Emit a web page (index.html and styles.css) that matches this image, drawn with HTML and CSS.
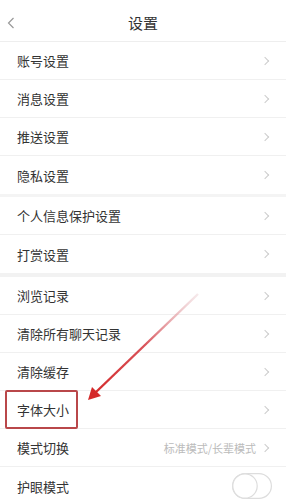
FILE: index.html
```html
<!DOCTYPE html>
<html lang="zh-CN">
<head>
    <meta charset="UTF-8">
    <meta name="viewport" content="width=device-width, initial-scale=1.0">
    <title>设置</title>
    <link rel="stylesheet" href="styles.css">
</head>
<body>

    <div class="header">
        <svg class="back" width="8" height="12" viewBox="0 0 8 12">
            <path d="M6.5 1 L1.5 6 L6.5 11" fill="none" stroke="#999" stroke-width="1.2"/>
        </svg>
        <h1>设置</h1>
    </div>

    <!-- 第一组 -->
    <div class="group">
        <div class="row"><span class="label">账号设置</span><i class="arrow"></i></div>
        <div class="row"><span class="label">消息设置</span><i class="arrow"></i></div>
        <div class="row"><span class="label">推送设置</span><i class="arrow"></i></div>
        <div class="row"><span class="label">隐私设置</span><i class="arrow"></i></div>
    </div>

    <!-- 第二组 -->
    <div class="group gap-small">
        <div class="row"><span class="label">个人信息保护设置</span><i class="arrow"></i></div>
        <div class="row"><span class="label">打赏设置</span><i class="arrow"></i></div>
    </div>

    <!-- 第三组 -->
    <div class="group gap-big">
        <div class="row"><span class="label">浏览记录</span><i class="arrow"></i></div>
        <div class="row"><span class="label">清除所有聊天记录</span><i class="arrow"></i></div>
        <div class="row"><span class="label">清除缓存</span><i class="arrow"></i></div>
        <div class="row"><span class="label"><span class="marked">字体大小</span></span><i class="arrow"></i></div>
        <div class="row"><span class="label">模式切换</span><span class="value">标准模式/长辈模式</span><i class="arrow"></i></div>
        <div class="row">
            <span class="label">护眼模式</span>
            <svg class="switch" width="40" height="26" viewBox="0 0 40 26">
                <rect x="0.6" y="0.6" width="38.8" height="24.8" rx="12.4" fill="#fff" stroke="#ddd" stroke-width="1.2"/>
                <circle cx="13" cy="13" r="12.2" fill="#fff" stroke="#ddd" stroke-width="1.2"/>
            </svg>
        </div>
    </div>

    <!-- 标注箭头 -->
    <svg class="pointer" width="286" height="500" viewBox="0 0 286 500">
        <defs>
            <linearGradient id="fade" x1="198" y1="294" x2="92" y2="396" gradientUnits="userSpaceOnUse">
                <stop offset="0" stop-color="#e8c8cc" stop-opacity="0.4"/>
                <stop offset="0.5" stop-color="#d9535a"/>
                <stop offset="1" stop-color="#d42a2a"/>
            </linearGradient>
        </defs>
        <line x1="198" y1="294" x2="95" y2="393" stroke="url(#fade)" stroke-width="2.4"/>
        <path d="M88 400 L92 387 L101 396 Z" fill="#d42a2a"/>
    </svg>

</body>
</html>
```

FILE: styles.css
```css
body {
    margin: 0;
    font-family: "Noto Sans CJK SC", "Noto Sans", sans-serif;
    background-color: #fff;
    color: #333;
    width: 286px;
    height: 500px;
    overflow: hidden;
    position: relative;
}
.header {
    height: 41px;
    border-bottom: 1px solid #eee;
    display: flex;
    align-items: center;
    justify-content: center;
    position: relative;
}
.header h1 {
    margin: 0;
    font-size: 15px;
    font-weight: normal;
    color: #333;
    padding-top: 4px;
}
.back {
    position: absolute;
    left: 7px;
    top: 17px;
}
.gap-small {
    border-top: 3px solid #f4f4f4;
}
.gap-big {
    border-top: 4px solid #f2f2f2;
}
.row {
    height: 37px;
    border-bottom: 1px solid #f0f0f0;
    display: flex;
    align-items: center;
    padding: 0 18px 0 17px;
    font-size: 13px;
}
.group .row:last-child {
    border-bottom: none;
    height: 38px;
}
.label {
    flex: 1;
}
.marked {
    display: inline-block;
    margin-left: -12px;
    padding: 8px 7px 8px 10px;
    border: 2px solid #b9474a;
    border-radius: 2px;
}
.value {
    font-size: 11px;
    color: #bbb;
    margin-right: 6px;
}
.arrow {
    width: 5px;
    height: 5px;
    border-top: 1px solid #ccc;
    border-right: 1px solid #ccc;
    transform: rotate(45deg);
}
.switch {
    margin-right: -4px;
}
.pointer {
    position: absolute;
    left: 0;
    top: 0;
    pointer-events: none;
}
```
